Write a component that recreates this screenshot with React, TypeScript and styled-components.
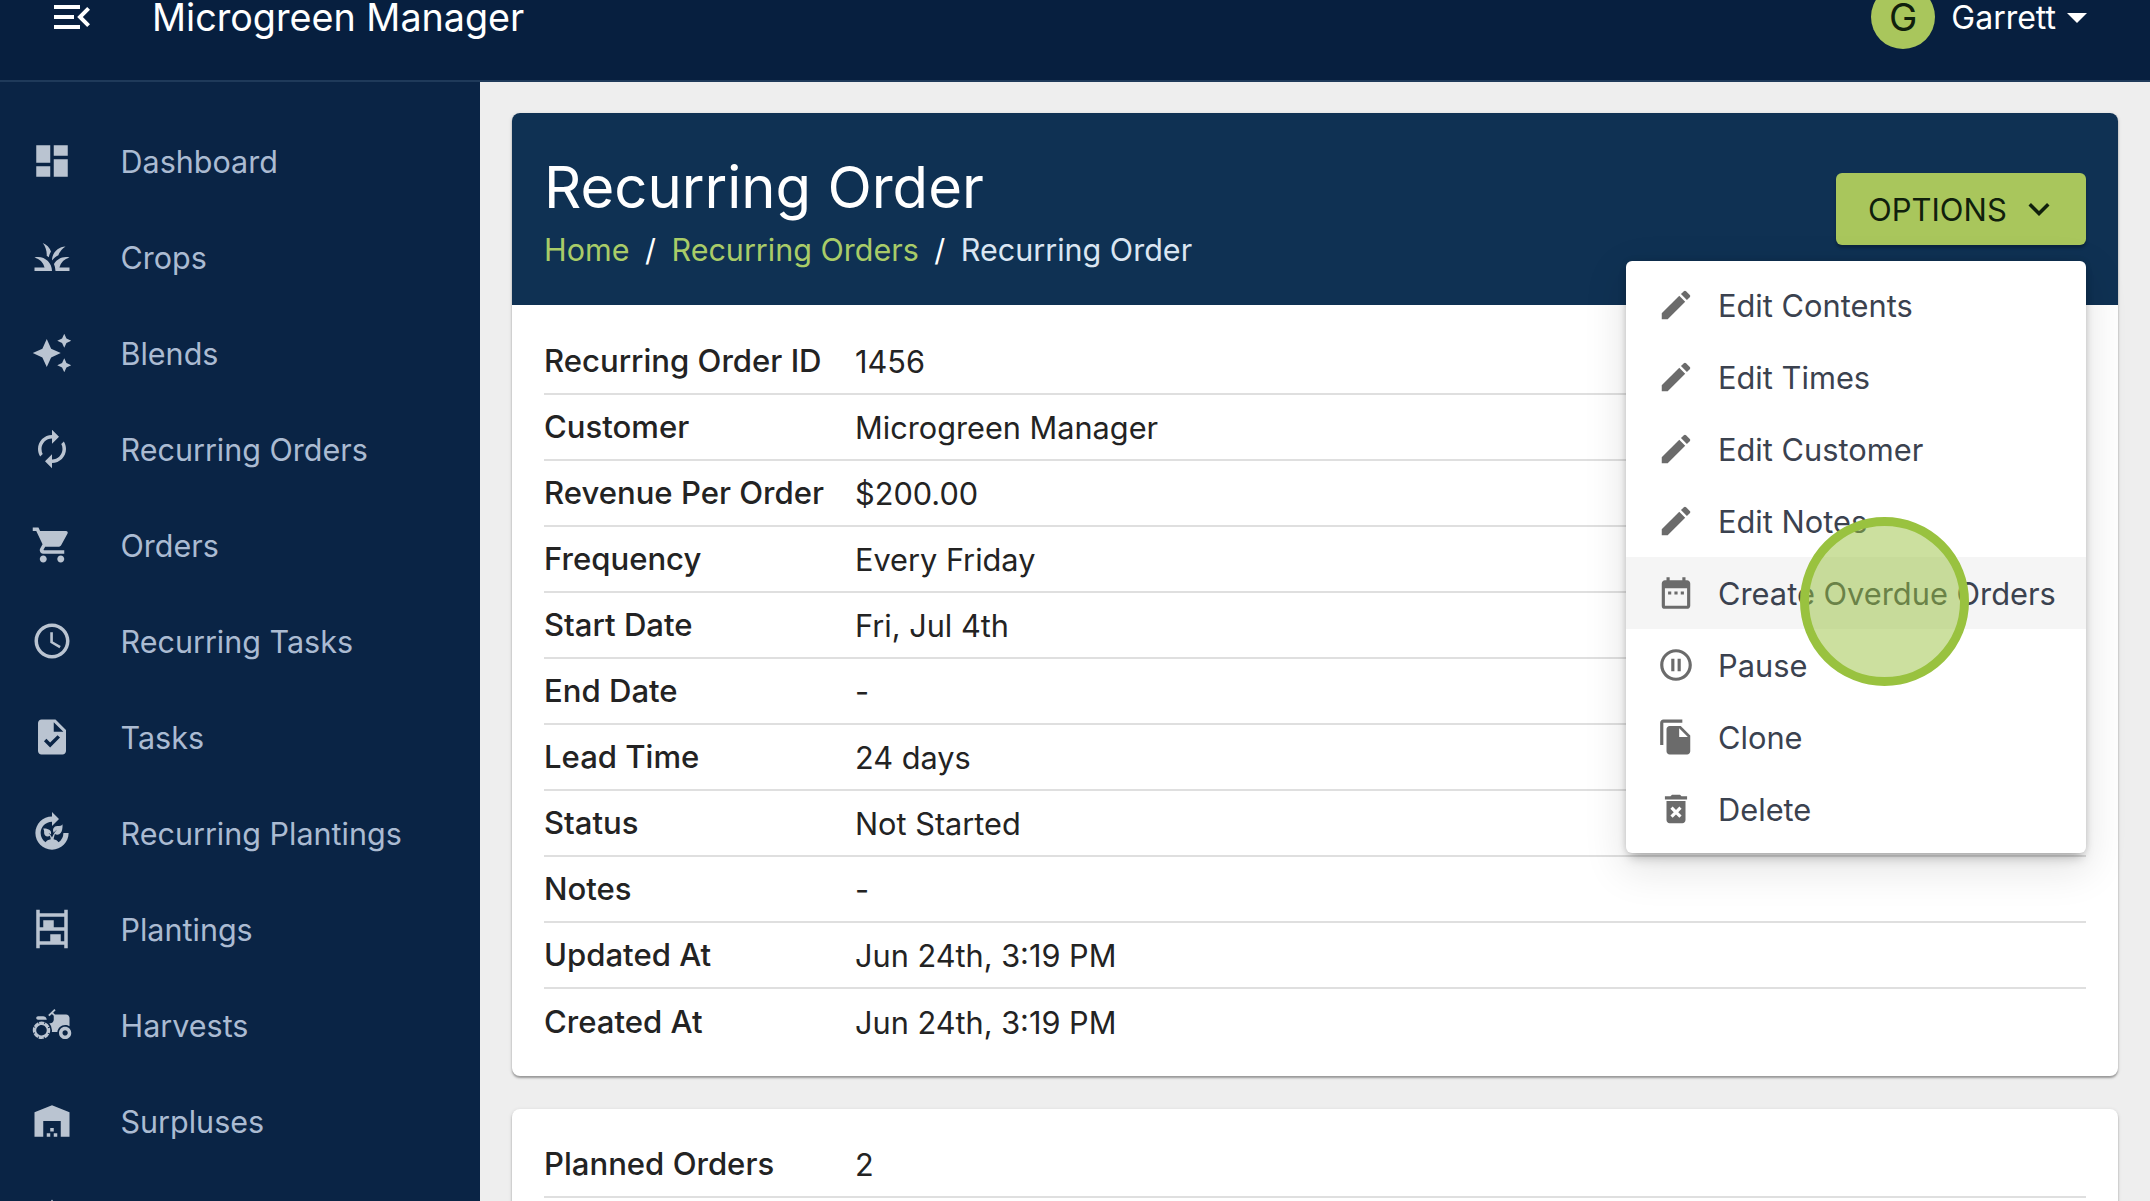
import React from 'react';
import styled, { createGlobalStyle } from 'styled-components';
import {
  MdAccessTime,
  MdAgriculture,
  MdArrowDropDown,
  MdAutoAwesome,
  MdAutorenew,
  MdCompost,
  MdDashboard,
  MdDateRange,
  MdDeleteForever,
  MdEdit,
  MdExpandMore,
  MdFileCopy,
  MdGrass,
  MdMenuOpen,
  MdPark,
  MdPauseCircleOutline,
  MdShelves,
  MdShoppingCart,
  MdTask,
  MdWarehouse,
} from 'react-icons/md';

const GlobalStyle = createGlobalStyle`
  html, body {
    margin: 0;
    padding: 0;
    height: 100%;
    overflow: hidden;
  }
  body {
    background-color: #eeeeee;
    font-family: Inter, "Liberation Sans", sans-serif;
  }
`;

const Page = styled.div`
  display: flex;
  flex-direction: column;
  height: 1201px;
  overflow: hidden;
`;

const TopBar = styled.header`
  display: flex;
  align-items: center;
  flex-shrink: 0;
  height: 82px;
  box-sizing: border-box;
  padding: 0 49px 46px 48px;
  background-color: #071f3f;
  border-bottom: 2px solid #1f3a5a;
  color: #ffffff;
`;

const MenuToggle = styled.span`
  display: flex;
  width: 48px;
  margin-right: 56px;
  font-size: 48px;
`;

const AppName = styled.div`
  flex: 1;
  font-size: 37.7px;
  font-weight: 400;
`;

const Avatar = styled.div`
  display: flex;
  align-items: center;
  justify-content: center;
  flex-shrink: 0;
  width: 64px;
  height: 64px;
  border-radius: 50%;
  background-color: #a9c65c;
  color: #10200c;
  font-size: 38px;
`;

const UserName = styled.span`
  margin-left: 16px;
  font-size: 32px;
`;

const Caret = styled(MdArrowDropDown)`
  margin-left: -3px;
  font-size: 48px;
`;

const Body = styled.div`
  display: flex;
  flex: 1;
  min-height: 0;
`;

const Sidebar = styled.nav`
  flex-shrink: 0;
  width: 480px;
  padding-top: 31px;
  background-color: #0a2445;
`;

const NavItem = styled.div`
  display: flex;
  align-items: center;
  height: 96px;
  padding-left: 31px;
  color: #abbbd2;
  font-size: 30.5px;
`;

const NavIcon = styled.span`
  display: flex;
  width: 89.5px;
  font-size: 42px;
  color: #bac4d1;
`;

const Main = styled.main`
  flex: 1;
  display: flex;
  flex-direction: column;
  gap: 33px;
  padding: 31px 32px 0;
  min-width: 0;
`;

const Card = styled.section`
  flex-shrink: 0;
  background-color: #ffffff;
  border-radius: 8px;
  box-shadow: 0 2px 2px rgba(0, 0, 0, 0.3), 0 1px 4px rgba(0, 0, 0, 0.12);
`;

const CardHeader = styled.div`
  display: flex;
  align-items: center;
  justify-content: space-between;
  height: 192px;
  box-sizing: border-box;
  padding: 0 32px;
  background-color: #0f3153;
  border-radius: 8px 8px 0 0;
`;

const TitleBlock = styled.div`
  margin-top: 3px;
`;

const Title = styled.h1`
  margin: 0;
  color: #ffffff;
  font-size: 58px;
  font-weight: 400;
  line-height: 72px;
`;

const Crumbs = styled.div`
  display: flex;
  gap: 15.5px;
  margin-top: 6px;
  color: #dbe6f2;
  font-size: 30.5px;
  line-height: 42px;
`;

const CrumbLink = styled.span`
  color: #a9cc68;
`;

const Separator = styled.span`
  color: #ffffff;
`;

const OptionsWrap = styled.div`
  position: relative;
`;

const OptionsButton = styled.button`
  display: flex;
  align-items: center;
  justify-content: space-between;
  width: 250px;
  height: 72px;
  box-sizing: border-box;
  padding: 0 26px 0 32px;
  border: none;
  border-radius: 6px;
  background-color: #a9c65c;
  color: #10200c;
  font-family: inherit;
  font-size: 31px;
  box-shadow: 0 3px 3px rgba(0, 0, 0, 0.25);
`;

const Menu = styled.div`
  position: absolute;
  top: 88px;
  right: 0;
  z-index: 10;
  width: 460px;
  padding: 8px 0;
  background-color: #ffffff;
  border-radius: 6px;
  box-shadow: 0 8px 12px -4px rgba(0, 0, 0, 0.25), 0 14px 40px 4px rgba(0, 0, 0, 0.1), 0 0 6px rgba(0, 0, 0, 0.12);
`;

const MenuItem = styled.div<{ $active?: boolean }>`
  display: flex;
  align-items: center;
  height: 72px;
  padding-left: 31px;
  color: #3b424f;
  font-size: 30.8px;
  background-color: ${(p) => (p.$active ? '#f5f5f5' : 'transparent')};
`;

const MenuIcon = styled.span`
  display: flex;
  width: 61px;
  font-size: 38px;
  color: #6b6b6b;
`;

const ClickMarker = styled.div`
  position: absolute;
  left: 174px;
  top: 256px;
  width: 169px;
  height: 169px;
  box-sizing: border-box;
  border: 9px solid #99c23f;
  border-radius: 50%;
  background-color: rgba(153, 194, 63, 0.5);
`;

const Rows = styled.div<{ $top: number; $bottom: number }>`
  padding: ${(p) => p.$top}px 32px ${(p) => p.$bottom}px;
`;

const Row = styled.div<{ $last?: boolean }>`
  display: flex;
  align-items: center;
  height: 66px;
  box-sizing: border-box;
  border-bottom: ${(p) => (p.$last ? 'none' : '2px solid #dfdfdf')};
  color: #232323;
  font-size: 30.7px;
`;

const RowLabel = styled.span`
  flex-shrink: 0;
  width: 311px;
  font-size: 31.1px;
  font-weight: 500;
`;

const details: [string, string][] = [
  ['Recurring Order ID', '1456'],
  ['Customer', 'Microgreen Manager'],
  ['Revenue Per Order', '$200.00'],
  ['Frequency', 'Every Friday'],
  ['Start Date', 'Fri, Jul 4th'],
  ['End Date', '-'],
  ['Lead Time', '24 days'],
  ['Status', 'Not Started'],
  ['Notes', '-'],
  ['Updated At', 'Jun 24th, 3:19 PM'],
  ['Created At', 'Jun 24th, 3:19 PM'],
];

const navItems: [React.ReactNode, string][] = [
  [<MdDashboard />, 'Dashboard'],
  [<MdGrass />, 'Crops'],
  [<MdAutoAwesome />, 'Blends'],
  [<MdAutorenew />, 'Recurring Orders'],
  [<MdShoppingCart />, 'Orders'],
  [<MdAccessTime />, 'Recurring Tasks'],
  [<MdTask />, 'Tasks'],
  [<MdCompost />, 'Recurring Plantings'],
  [<MdShelves />, 'Plantings'],
  [<MdAgriculture />, 'Harvests'],
  [<MdWarehouse />, 'Surpluses'],
  // only the tip of this icon shows at the bottom edge, its label is off the page
  [<MdPark />, ''],
];

const menuItems: [React.ReactNode, string][] = [
  [<MdEdit />, 'Edit Contents'],
  [<MdEdit />, 'Edit Times'],
  [<MdEdit />, 'Edit Customer'],
  [<MdEdit />, 'Edit Notes'],
  [<MdDateRange />, 'Create Overdue Orders'],
  [<MdPauseCircleOutline />, 'Pause'],
  [<MdFileCopy />, 'Clone'],
  [<MdDeleteForever />, 'Delete'],
];

const App: React.FC = () => {
  return (
    <Page>
      <GlobalStyle />
      <TopBar>
        <MenuToggle>
          <MdMenuOpen />
        </MenuToggle>
        <AppName>Microgreen Manager</AppName>
        <Avatar>G</Avatar>
        <UserName>Garrett</UserName>
        <Caret />
      </TopBar>
      <Body>
        <Sidebar>
          {navItems.map(([icon, label]) => (
            <NavItem key={label}>
              <NavIcon>{icon}</NavIcon>
              {label}
            </NavItem>
          ))}
        </Sidebar>
        <Main>
          <Card>
            <CardHeader>
              <TitleBlock>
                <Title>Recurring Order</Title>
                <Crumbs>
                  <CrumbLink>Home</CrumbLink>
                  <Separator>/</Separator>
                  <CrumbLink>Recurring Orders</CrumbLink>
                  <Separator>/</Separator>
                  <span>Recurring Order</span>
                </Crumbs>
              </TitleBlock>
              <OptionsWrap>
                <OptionsButton>
                  OPTIONS
                  <MdExpandMore size={42} />
                </OptionsButton>
                <Menu>
                  {menuItems.map(([icon, label]) => (
                    <MenuItem key={label} $active={label === 'Create Overdue Orders'}>
                      <MenuIcon>{icon}</MenuIcon>
                      {label}
                    </MenuItem>
                  ))}
                  <ClickMarker />
                </Menu>
              </OptionsWrap>
            </CardHeader>
            <Rows $top={24} $bottom={21}>
              {details.map(([label, value], i) => (
                <Row key={label} $last={i === details.length - 1}>
                  <RowLabel>{label}</RowLabel>
                  <span>{value}</span>
                </Row>
              ))}
            </Rows>
          </Card>
          <Card>
            <Rows $top={23} $bottom={40}>
              <Row>
                <RowLabel>Planned Orders</RowLabel>
                <span>2</span>
              </Row>
            </Rows>
          </Card>
        </Main>
      </Body>
    </Page>
  );
};

export default App;
